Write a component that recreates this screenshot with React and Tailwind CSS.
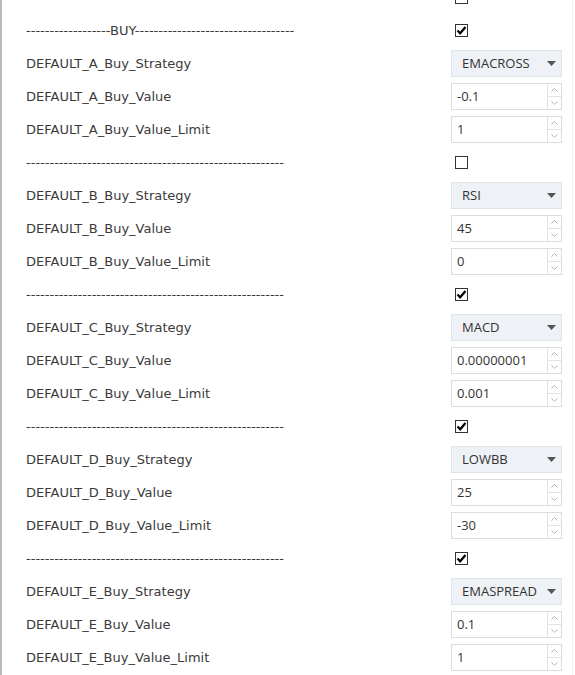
import React from "react";

const line = "-".repeat(55);
const sections = [
  { head: "-".repeat(18) + "BUY" + "-".repeat(34), checked: true, id: "A", strategy: "EMACROSS", value: "-0.1", limit: "1" },
  { head: line, checked: false, id: "B", strategy: "RSI", value: "45", limit: "0" },
  { head: line, checked: true, id: "C", strategy: "MACD", value: "0.00000001", limit: "0.001" },
  { head: line, checked: true, id: "D", strategy: "LOWBB", value: "25", limit: "-30" },
  { head: line, checked: true, id: "E", strategy: "EMASPREAD", value: "0.1", limit: "1" },
];

const Checkbox = ({ checked }) => (
  <div className="ml-[4px] w-[13px] h-[13px] border border-[#333] bg-white flex items-center justify-center">
    {checked && (
      <svg width="11" height="11" viewBox="0 0 11 11">
        <path d="M1.5 5.5 L4.2 8.3 L9.5 2" fill="none" stroke="#000" strokeWidth="2.2" />
      </svg>
    )}
  </div>
);

const Select = ({ value }) => (
  <div className="w-[111px] h-[27px] bg-[#eef1f5] border border-[#dfe3e8] flex items-center pl-[10px] pr-[5px] text-[#333] font-['Open_Sans',sans-serif] text-[13px]">
    <span className="flex-1">{value}</span>
    <svg width="9" height="5" viewBox="0 0 9 5">
      <path d="M0 0 L9 0 L4.5 5 Z" fill="#555" />
    </svg>
  </div>
);

const NumberInput = ({ value }) => (
  <div className="w-[111px] h-[27px] bg-white border border-[#dcdcdc] flex text-[#333] font-['Open_Sans',sans-serif] text-[13px]">
    <span className="flex-1 flex items-center pl-[5px]">{value}</span>
    <div className="w-[14px] border-l border-[#e3e3e3] flex flex-col">
      <div className="flex-1 border-b border-[#e3e3e3] flex items-center justify-center">
        <svg width="7" height="4" viewBox="0 0 7 4">
          <path d="M0.5 3.5 L3.5 0.5 L6.5 3.5" fill="none" stroke="#b5b5b5" strokeWidth="1" />
        </svg>
      </div>
      <div className="flex-1 flex items-center justify-center">
        <svg width="7" height="4" viewBox="0 0 7 4">
          <path d="M0.5 0.5 L3.5 3.5 L6.5 0.5" fill="none" stroke="#b5b5b5" strokeWidth="1" />
        </svg>
      </div>
    </div>
  </div>
);

const Row = ({ label, children }) => (
  <div className="h-[33px] shrink-0 grid grid-cols-[425px_111px] items-center pl-[24px]">
    <div className="text-[#3a3a3a] whitespace-nowrap">{label}</div>
    <div>{children}</div>
  </div>
);

export default function App() {
  return (
    <div className="w-[575px] h-[675px] overflow-hidden bg-white font-['DejaVu_Sans',sans-serif] text-[13px]">
      <div className="h-full flex flex-col border-l-2 border-[#b9b9b9] mr-[2px] border-r border-r-[#efefef]">
        <div className="mt-[-19px] flex flex-col">
          <Row label="">
            <Checkbox checked={false} />
          </Row>
          {sections.map((s) => (
            <React.Fragment key={s.id}>
              <Row label={s.head}>
                <Checkbox checked={s.checked} />
              </Row>
              <Row label={`DEFAULT_${s.id}_Buy_Strategy`}>
                <Select value={s.strategy} />
              </Row>
              <Row label={`DEFAULT_${s.id}_Buy_Value`}>
                <NumberInput value={s.value} />
              </Row>
              <Row label={`DEFAULT_${s.id}_Buy_Value_Limit`}>
                <NumberInput value={s.limit} />
              </Row>
            </React.Fragment>
          ))}
        </div>
      </div>
    </div>
  );
}
